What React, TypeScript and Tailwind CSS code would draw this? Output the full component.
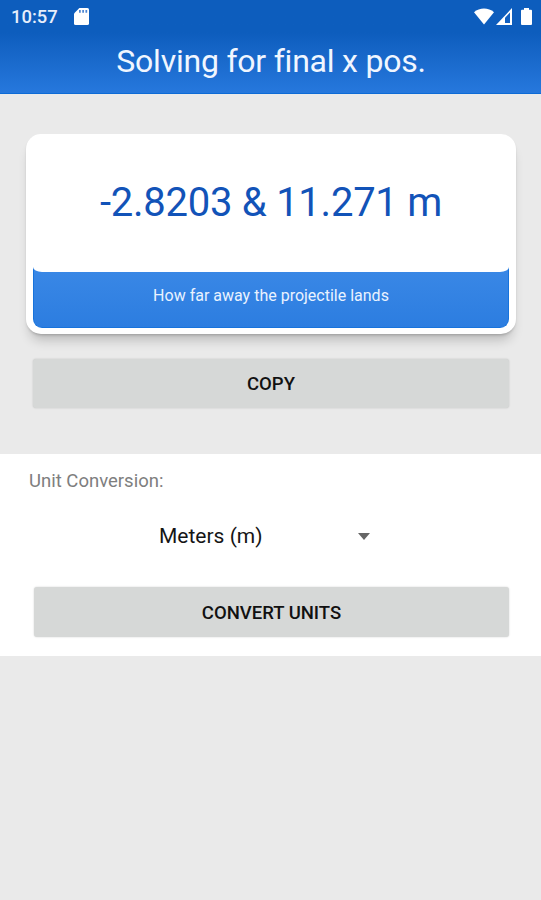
import React, { useState } from 'react'

interface IButtonProps {
  text: string;
  className?: string;
  textClassName?: string;
}

const GreyButton = ({ text, className = "", textClassName = "" }: IButtonProps) => {
  return (
    <button type="button" className={`flex items-center justify-center rounded-[3px] bg-[#d6d8d7] shadow-[0_0_2px_rgba(0,0,0,0.18)] ${className}`}>
      <span className={`font-medium whitespace-nowrap text-[#111] ${textClassName}`}>{text}</span>
    </button>
  )
}

const StatusBar = () => {
  return (
    <div className="flex h-[34px] items-center justify-between pl-[11px] pr-[9px] text-white">
      <div className="flex items-center gap-[16px]">
        <span className="text-[18.4px] leading-[34px] font-medium text-[#e6eefb]">10:57</span>
        <svg className="-mt-px" width="15" height="17" viewBox="0 0 14 17" preserveAspectRatio="none">
          <path d="M5 0H12.5Q14 0 14 1.5V15.500Q14 17 12.500 17H1.500Q0 17 0 15.500V5.500Z" fill="currentColor" />
          <path d="M5.500 2V4.800M8.500 2V4.800M11.500 2V4.800" stroke="#4c85d2" strokeWidth="1.600" />
        </svg>
      </div>
      <div className="-mt-px flex items-center">
        <svg width="20" height="17" viewBox="0 0 20 17">
          <path d="M0 4.200C5.500-.7 14.500-.7 20 4.200L10 16.500Z" fill="currentColor" />
        </svg>
        <svg className="ml-[2px]" width="16" height="17" viewBox="0 0 16 17">
          <path d="M0 17L16 0V17Z" fill="currentColor" />
          <path d="M9 9.800L14 4.500V15H9Z" fill="#1160c1" />
        </svg>
        <svg className="ml-[9px]" width="11" height="17" viewBox="0 0 11 17">
          <path d="M3 0H8V1.700H10Q11 1.700 11 2.700V16Q11 17 10 17H1Q0 17 0 16V2.700Q0 1.700 1 1.700H3Z" fill="currentColor" />
        </svg>
      </div>
    </div>
  )
}

const App = () => {
  const [unit] = useState("Meters (m)")

  return (
    <div className="flex min-h-[900px] w-full flex-col bg-[#eaeaea] font-[Roboto,sans-serif]">
      <header className="h-[94px] border-b border-[#0d6bd6] bg-linear-to-b from-[#0d5dbd] from-35% to-[#2678dd]">
        <StatusBar />
        <h1 className="pl-px text-center text-[32px] leading-[54px] tracking-[-0.22px] whitespace-nowrap text-[#f0f6ff]">Solving for final x pos.</h1>
      </header>

      <main className="flex flex-col">
        <div className="mr-[25px] ml-[26px] mt-10 h-[200px] rounded-[15px] bg-white p-[7px] shadow-[0_10px_12px_-4px_rgba(0,0,0,0.2),0_2px_3px_-1px_rgba(0,0,0,0.2)]">
          <div className="relative z-10 flex h-[131px] items-center justify-center rounded-b-[9px_5px] bg-white pb-[8px]">
            <span className="text-[40px] leading-none tracking-[-0.25px] whitespace-nowrap text-[#1253b8]">-2.8203 &amp; 11.271 m</span>
          </div>
          <div className="-mt-[5px] flex h-[61px] items-center justify-center rounded-b-[9px] border border-t-0 border-[#1773dc] bg-linear-to-b from-[#3a88e6] to-[#2c7de0] pb-[3px]">
            <span className="text-base whitespace-nowrap text-[#e9f2ff]">How far away the projectile lands</span>
          </div>
        </div>

        <GreyButton text="COPY" className="mr-[32px] ml-[33px] mt-[25px] h-[49px] pt-[3px]" textClassName="text-[18.500px]" />

        <section className="mt-[46px] flex h-[202px] flex-col bg-white">
          <span className="ml-[29px] mt-[15px] text-[18.5px] leading-6 text-[#7e7e7e]">Unit Conversion:</span>
          <div className="ml-[159px] mt-[31px] flex w-[211px] items-center justify-between">
            <span className="text-[21px] leading-6 whitespace-nowrap text-[#151515]">{unit}</span>
            <svg width="12" height="7" viewBox="0 0 12 7">
              <path d="M0 0H12L6 7Z" fill="#666" />
            </svg>
          </div>
          <GreyButton text="CONVERT UNITS" className="mr-[32px] ml-[34px] mt-[39px] h-[50px] pt-[3px]" textClassName="text-[18.500px]" />
        </section>
      </main>
    </div>
  )
}

export default App
